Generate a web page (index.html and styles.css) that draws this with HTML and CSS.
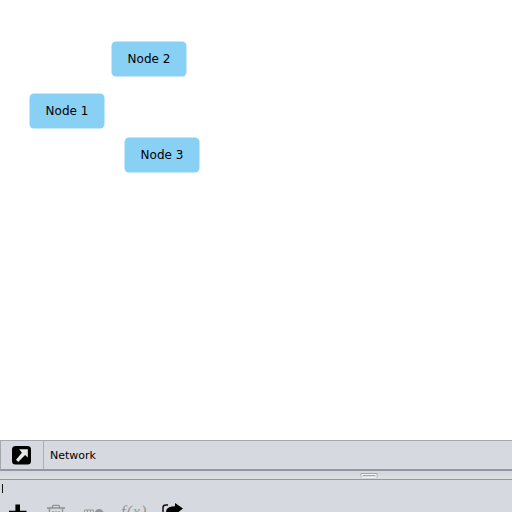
FILE: index.html
```
<!DOCTYPE html>
<html lang="en">
<head>
<meta charset="utf-8">
<title>Network</title>
<link rel="stylesheet" href="styles.css">
</head>
<body>
<main class="canvas">
  <div class="node node-1"><svg class="node-box" width="76" height="36"><rect x=".5" y=".5" width="75" height="35" rx="4.5"/></svg><span class="label">Node 1</span></div>
  <div class="node node-2"><svg class="node-box" width="76" height="36"><rect x=".5" y=".5" width="75" height="35" rx="4.5"/></svg><span class="label">Node 2</span></div>
  <div class="node node-3"><svg class="node-box" width="76" height="36"><rect x=".5" y=".5" width="75" height="35" rx="4.5"/></svg><span class="label">Node 3</span></div>
</main>
<header class="titlebar">
  <div class="detach">
    <svg width="19" height="19" viewBox="0 0 19 19"><rect width="19" height="18.5" rx="3.5"/><path class="arrow" d="M7.2 3.2H15.8V11.6L13.1 9L6.2 15.9L4 13.7L9.9 6.8Z"/></svg>
  </div>
  <div class="title">Network</div>
</header>
<div class="splitter"><svg class="grip" width="18" height="6" viewBox="0 0 18 6"><rect class="grip-fill" x=".5" y=".5" width="17" height="4.5" rx="2"/><path class="grip-dark" d="M.5 1.5Q.5 .5 1.5 .5H16.5Q17.5 .5 17.5 1.5M3 2.5H15"/><path class="grip-light" d="M2 1.5H16M2 4.5H16"/></svg></div>
<section class="panel">
  <div class="caret-row"><i class="caret"></i></div>
  <div class="tools">
    <svg class="plus" width="18" height="9" viewBox="0 0 18 9"><path d="M6.4 1.6H11V7.8H17.5V9H0V7.8H6.4Z"/></svg>
    <svg class="trash" width="18" height="9" viewBox="0 0 18 9"><path d="M0 5H18M5.5 4.5V3.4Q5.5 2.4 6.5 2.4H11.5Q12.5 2.4 12.5 3.4V4.5M2.5 5V9M15.5 5V9M6 8V9M9 8V9M12 8V9"/></svg>
    <svg class="map" width="20" height="9" viewBox="0 0 20 9"><path d="M.5 9V7H9.5V9M3.5 7V9M6.5 7V9"/><path class="solid" d="M11 9Q12 6 15 6T19.5 9Z"/></svg>
    <div class="fx">f(<span class="var">x</span>)</div>
    <svg class="share" width="21" height="9" viewBox="0 0 21 9"><path d="M4 9Q4 3.5 13 3.2V0L21 5.5L16.5 9Z"/><path class="outline" d="M1 9V4.5Q1 2 4 2H6"/></svg>
  </div>
</section>
</body>
</html>
```
FILE: styles.css
```
* { box-sizing: border-box; }
body {
  margin: 0;
  width: 512px;
  height: 512px;
  overflow: hidden;
  display: flex;
  flex-direction: column;
  background: #d6d9df;
  color: #000;
  font: 11px/14px "DejaVu Sans", sans-serif;
}
svg { display: block; flex: none; }
.canvas { position: relative; height: 440px; flex: none; background: #fff; }
.node {
  position: absolute;
  width: 76px;
  height: 36px;
  font-size: 12px;
  line-height: 37px;
  text-align: center;
}
.node-box { position: absolute; left: 0; top: 0; fill: #89d0f5; }
.label { position: relative; }
.node-1 { left: 29px; top: 93px; }
.node-2 { left: 111px; top: 41px; }
.node-3 { left: 124px; top: 137px; }
.titlebar {
  display: flex;
  flex: none;
  height: 31px;
  border-top: 1px solid #a4a7b1;
  border-left: 1px solid #a4a7b1;
  border-bottom: 2px solid #9297a1;
}
.detach {
  width: 43px;
  padding: 5px 0 0 11px;
  border-right: 1px solid #a9adb7;
}
.arrow { fill: #e5e9e9; }
.title { padding: 8px 0 0 6px; }
.splitter {
  height: 9px;
  flex: none;
  padding: 2px 0 0 360px;
  border-bottom: 1px solid #9297a1;
  background: linear-gradient(#d3d6dc, #dcdfe4);
}
.grip { fill: none; }
.grip-fill { fill: #d9dce1; stroke: #c2c6cd; }
.grip-dark { stroke: #a0a4ab; }
.grip-light { stroke: #f5f6f8; }
.panel { flex: 1; }
.caret-row { height: 23px; padding: 4px 0 0 2px; }
.caret { display: block; width: 1px; height: 9px; background: #111; }
.tools {
  display: flex;
  align-items: flex-start;
  height: 9px;
  padding-left: 9px;
  overflow: hidden;
}
.trash { margin-left: 20px; fill: none; stroke: #929493; stroke-width: 1.4; }
.map { margin-left: 19px; fill: none; stroke: #969896; }
.solid { fill: #929493; stroke: none; }
.fx {
  width: 28px;
  margin-left: 17px;
  color: #929493;
  font: italic 16px/18px "Liberation Serif", serif;
  letter-spacing: 1px;
  white-space: nowrap;
}
.var { color: #84a094; }
.share { margin-left: 13px; }
.outline { fill: none; stroke: #111; stroke-width: 1.5; }
```
